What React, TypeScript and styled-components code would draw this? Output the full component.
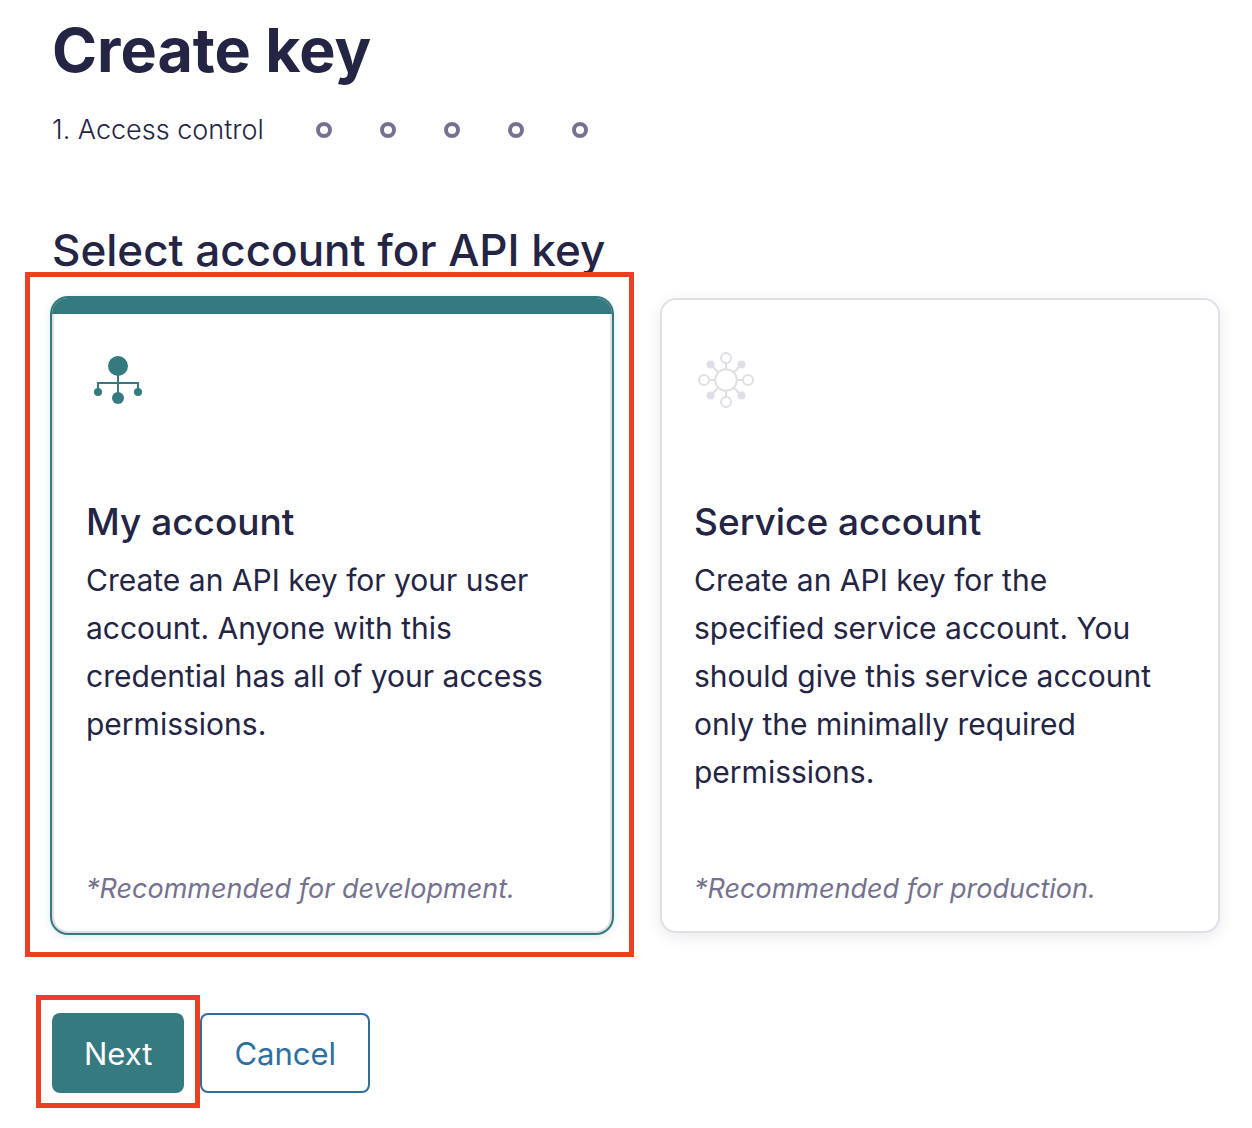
import React from 'react';
import styled, { createGlobalStyle } from 'styled-components';

const ink = '#242445';
const teal = '#367a81';
const blue = '#2f6f9f';
const muted = '#757290';
const line = '#e0dfe6';
const red = '#ec4024';

const GlobalStyle = createGlobalStyle`
  *, *::before, *::after { box-sizing: border-box; }
  body {
    margin: 0;
    background: #fff;
    color: ${ink};
    font-family: Inter, "Liberation Sans", sans-serif;
  }
  h1, h2, h3, p, ol { margin: 0; padding: 0; }
`;

const Page = styled.main`
  padding: 14px 32px 16px 52px;
`;

const Title = styled.h1`
  font-size: 61px;
  line-height: 72px;
  font-weight: 700;
`;

const Stepper = styled.ol`
  display: flex;
  align-items: center;
  gap: 48px;
  margin-top: 24px;
  list-style: none;
  font-size: 27px;
  line-height: 40px;
  font-weight: 300;
`;

const StepLabel = styled.li`
  min-width: 216px;
`;

const StepDot = styled.li`
  width: 16px;
  height: 16px;
  border: 4px solid ${muted};
  border-radius: 50%;
`;

const Choices = styled.form`
  display: block;
`;

const SectionTitle = styled.h2`
  margin-top: 72px;
  font-size: 44px;
  line-height: 56px;
  font-weight: 500;
`;

const Cards = styled.div`
  display: grid;
  grid-template-columns: 1fr 1fr;
  gap: 48px;
  margin-top: 20px;
`;

const Highlight = styled.div<{ $inset: string }>`
  position: relative;
  display: grid;

  &::after {
    content: '';
    position: absolute;
    inset: ${p => p.$inset};
    border: 5px solid ${red};
    pointer-events: none;
  }
`;

const Card = styled.label<{ $selected?: boolean }>`
  position: relative;
  display: flex;
  flex-direction: column;
  min-height: 635px;
  padding: 48px 40px 24px 32px;
  border: 2px solid ${line};
  border-radius: 16px;
  background: #fff;
  box-shadow: ${p =>
    p.$selected
      ? `0 0 0 2px ${teal}, 0 2px 8px 2px rgba(54, 122, 129, 0.16)`
      : '0 4px 16px rgba(36, 36, 69, 0.1)'};
  cursor: pointer;

  &::before {
    content: '';
    display: ${p => (p.$selected ? 'block' : 'none')};
    position: absolute;
    inset: -2px -2px auto;
    height: 16px;
    border-radius: 16px 16px 0 0;
    background: ${teal};
  }
`;

const Radio = styled.input`
  position: absolute;
  opacity: 0;
`;

const CardIcon = styled.svg`
  width: 64px;
  height: 64px;
`;

const CardTitle = styled.h3`
  margin-top: 84px;
  font-size: 37px;
  line-height: 52px;
  font-weight: 500;
`;

const CardText = styled.p`
  margin-top: 8px;
  font-size: 30px;
  line-height: 48px;
`;

const CardNote = styled.p`
  margin-top: auto;
  color: ${muted};
  font-size: 27px;
  line-height: 36px;
  font-style: italic;
`;

const Actions = styled.div`
  display: flex;
  gap: 16px;
  margin-top: 80px;
`;

const Button = styled.button<{ $primary?: boolean }>`
  height: 80px;
  padding: 0 32px;
  border: ${p => (p.$primary ? 'none' : `2px solid ${blue}`)};
  border-radius: 8px;
  background: ${p => (p.$primary ? teal : '#fff')};
  color: ${p => (p.$primary ? '#fff' : blue)};
  font-family: inherit;
  font-size: 31px;
  cursor: pointer;
`;

function MyAccountIcon() {
  return (
    <CardIcon viewBox="0 0 64 64" fill={teal} aria-hidden="true">
      <path d="M12 44V35H52V44M32 18V50" fill="none" stroke={teal} strokeWidth="2" />
      <circle cx="32" cy="18" r="10" />
      <circle cx="12" cy="44" r="4" />
      <circle cx="52" cy="44" r="4" />
      <circle cx="32" cy="50" r="6" />
    </CardIcon>
  );
}

function ServiceAccountIcon() {
  return (
    <CardIcon viewBox="0 0 64 64" fill="none" stroke={line} strokeWidth="2" aria-hidden="true">
      <path d="M32 15V21M32 43V49M15 32H21M43 32H49M16.5 16.5L24 24M47.5 16.5L40 24M16.5 47.5L24 40M47.5 47.5L40 40" />
      <circle cx="32" cy="32" r="10.8" />
      <circle cx="32" cy="10" r="5" />
      <circle cx="54" cy="32" r="5" />
      <circle cx="32" cy="54" r="5" />
      <circle cx="10" cy="32" r="5" />
      <g fill={line} stroke="none">
        <circle cx="16.5" cy="16.5" r="4" />
        <circle cx="47.5" cy="16.5" r="4" />
        <circle cx="16.5" cy="47.5" r="4" />
        <circle cx="47.5" cy="47.5" r="4" />
      </g>
    </CardIcon>
  );
}

export default function App() {
  const [account, setAccount] = React.useState('user');
  const steps = [2, 3, 4, 5, 6];

  return (
    <>
      <GlobalStyle />
      <Page>
        <Title>Create key</Title>
        <Stepper>
          <StepLabel>1. Access control</StepLabel>
          {steps.map(n => <StepDot key={n} />)}
        </Stepper>
        <Choices>
          <SectionTitle>Select account for API key</SectionTitle>
          <Cards>
            <Highlight $inset="-26px -22px -24px -27px">
              <Card $selected={account === 'user'}>
                <Radio
                  type="radio"
                  name="account"
                  checked={account === 'user'}
                  onChange={() => setAccount('user')}
                />
                <MyAccountIcon />
                <CardTitle>My account</CardTitle>
                <CardText>
                  Create an API key for your user account. Anyone with this credential has all of
                  your access permissions.
                </CardText>
                <CardNote>*Recommended for development.</CardNote>
              </Card>
            </Highlight>
            <Card $selected={account === 'service'}>
              <Radio
                type="radio"
                name="account"
                checked={account === 'service'}
                onChange={() => setAccount('service')}
              />
              <ServiceAccountIcon />
              <CardTitle>Service account</CardTitle>
              <CardText>
                Create an API key for the specified service account. You should give this service
                account only the minimally required permissions.
              </CardText>
              <CardNote>*Recommended for production.</CardNote>
            </Card>
          </Cards>
          <Actions>
            <Highlight $inset="-18px -16px -15px -16px">
              <Button type="button" $primary>Next</Button>
            </Highlight>
            <Button type="button">Cancel</Button>
          </Actions>
        </Choices>
      </Page>
    </>
  );
}
